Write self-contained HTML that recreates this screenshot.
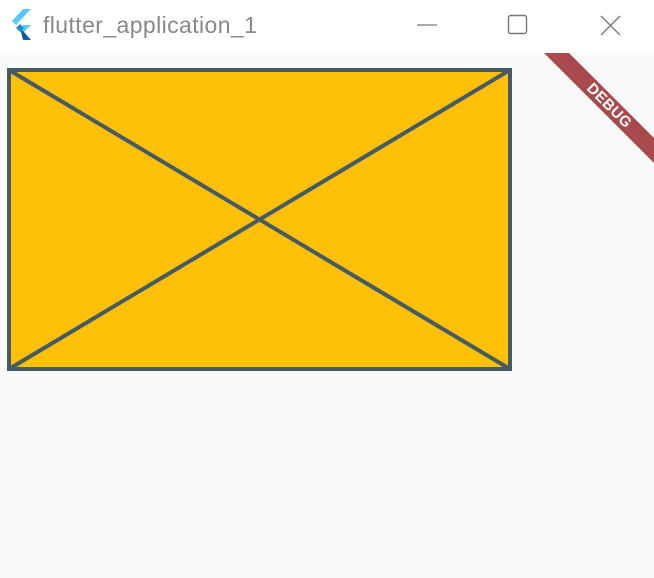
<!DOCTYPE html>
<html><head><style>
html,body{margin:0;padding:0;width:654px;height:578px;overflow:hidden;background:#fafafa;font-family:"Liberation Sans",sans-serif}
.tb{position:absolute;left:0;top:0;width:654px;height:53px;background:#fff}
.t{position:absolute;left:43px;top:12px;font-size:23px;letter-spacing:0.4px;color:#888}
</style></head><body>
<div class="tb"><div class="t">flutter_application_1</div></div>
<svg width="654" height="578" style="position:absolute;left:0;top:0">
<polygon points="23,9 31,9 16,25 12,21" fill="#5cc8f8"/>
<polygon points="23,25 31,25 24,32 20,28" fill="#5cc8f8"/>
<polygon points="20,28 24,32 31,40 23,40" fill="#0d5aa7"/>
<polygon points="16,28 20,24 24,28 20,32" fill="#1a8bd6"/>
<line x1="417" y1="25" x2="437" y2="25" stroke="#777" stroke-width="1.3"/>
<rect x="508.5" y="15.5" width="18" height="18" rx="2" fill="none" stroke="#777" stroke-width="1.4"/>
<path d="M601 16 L620 35 M620 16 L601 35" stroke="#777" stroke-width="1.3"/>
<rect x="9" y="70" width="501" height="299" fill="#fec107" stroke="#455a64" stroke-width="4"/>
<path d="M9 70 L510 369 M510 70 L9 369" stroke="#455a64" stroke-width="4"/>
<polygon points="544,53 569,53 654,138 654,163" fill="#a84a4c"/>
<text x="0" y="0" transform="translate(606,109) rotate(45)" text-anchor="middle" font-family="Liberation Sans" font-weight="bold" font-size="15" letter-spacing="0.5" fill="#fff">DEBUG</text>
</svg>
</body></html>
